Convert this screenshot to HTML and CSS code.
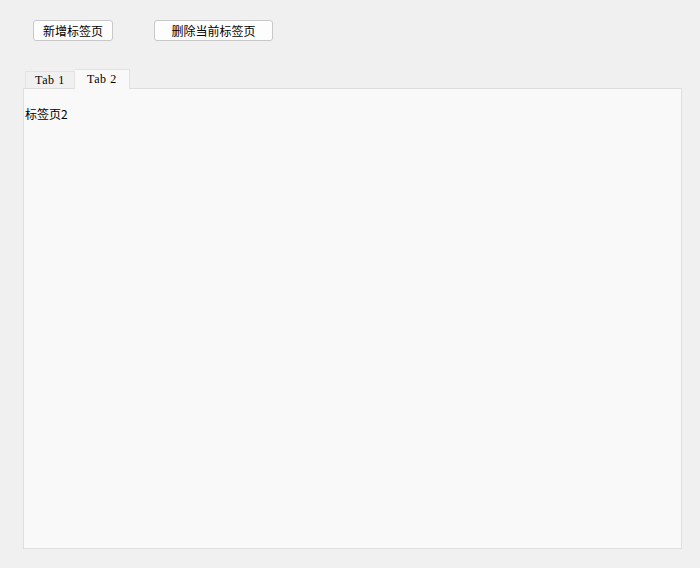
FILE: index.html
```html
<!DOCTYPE html>
<html lang="zh-CN">
	<head>
		<meta charset="UTF-8" />
		<meta name="viewport" content="width=device-width, initial-scale=1.0" />
		<title>标签页</title>
		<link rel="stylesheet" href="styles.css">
	</head>
	<body>
		<div class="toolbar">
			<button class="btn btn-add">新增标签页</button>
			<button class="btn btn-del">删除当前标签页</button>
		</div>
		<div class="tabs">
			<div class="tab-bar">
				<span class="tab">Tab 1</span>
				<span class="tab active">Tab 2</span>
			</div>
			<div class="tab-pane">标签页2</div>
		</div>
	</body>
</html>
```

FILE: styles.css
```css
body {
	margin: 0;
	background: #f0f0f0;
	font-family: "Noto Sans CJK SC", "Liberation Sans", sans-serif;
	font-size: 12px;
	color: #000;
}
.toolbar {
	display: flex;
	gap: 41px;
	padding: 20px 0 0 33px;
	height: 21px;
}
.btn {
	box-sizing: border-box;
	height: 21px;
	padding: 0;
	border: 1px solid #c8c8c8;
	border-radius: 3px;
	background: #fdfdfd;
	font-family: inherit;
	font-size: 12px;
	line-height: 18px;
	color: #000;
}
.btn-add {
	width: 80px;
}
.btn-del {
	width: 119px;
}
.tabs {
	margin: 28px 0 0 23px;
	width: 659px;
}
.tab-bar {
	display: flex;
	align-items: flex-end;
	padding-left: 2px;
	height: 19px;
}
.tab {
	box-sizing: border-box;
	height: 17px;
	width: 50px;
	border: 1px solid #e3e3e3;
	border-bottom: none;
	background: #f0f0f0;
	font-family: "Liberation Serif", serif;
	font-size: 12px;
	letter-spacing: 0.6px;
	line-height: 17px;
	text-align: center;
	color: #000;
}
.tab.active {
	width: 55px;
	height: 20px;
	margin-bottom: -1px;
	background: #f9f9f9;
	border-left: none;
	position: relative;
	line-height: 19px;
}
.tab-pane {
	box-sizing: border-box;
	height: 461px;
	border: 1px solid #dedede;
	background: #f9f9f9;
	padding: 15px 0 0 1px;
	line-height: 20px;
}
```
